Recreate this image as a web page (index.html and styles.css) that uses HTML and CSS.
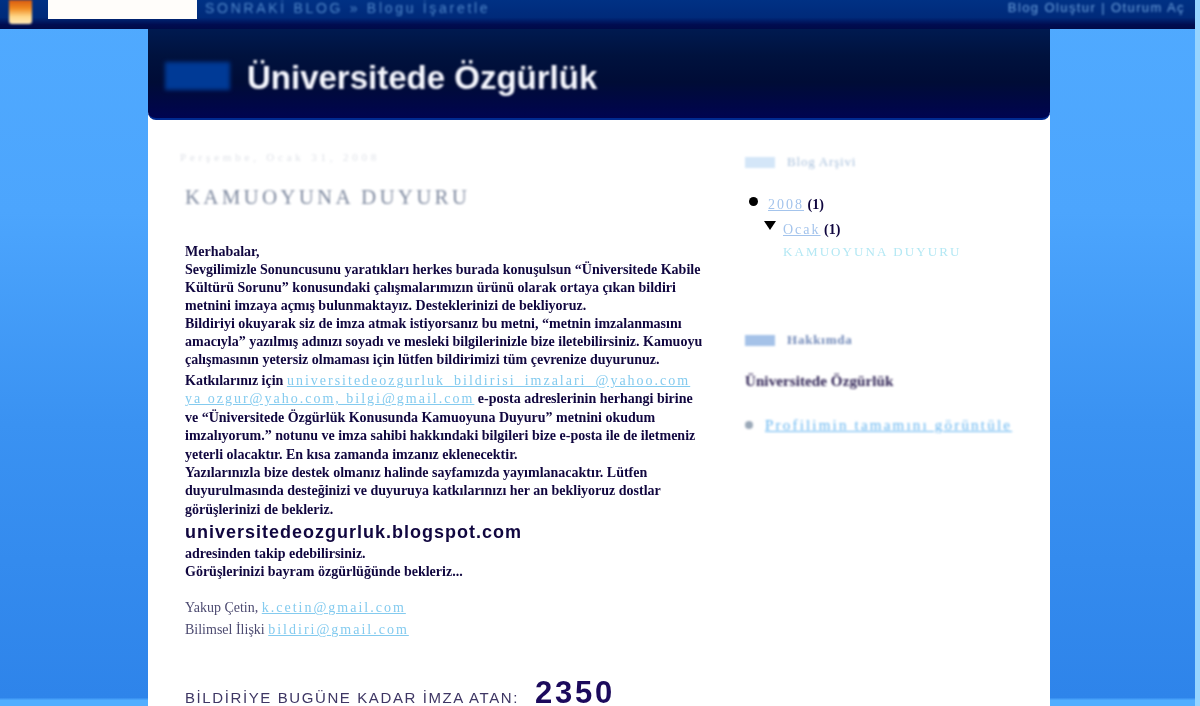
FILE: index.html
```html
<!DOCTYPE html>
<html lang="tr">
<head>
<meta charset="utf-8">
<title>Üniversitede Özgürlük</title>
<link rel="stylesheet" href="styles.css">
</head>
<body>
<div class="navbar">
  <div class="nav-logo"></div>
  <div class="nav-search"></div>
  <div class="nav-left">SONRAKİ BLOG » Blogu İşaretle</div>
  <div class="nav-right">Blog Oluştur | Oturum Aç</div>
</div>
<div class="page">
  <header class="blog-header">
    <div class="header-mark"></div>
    <h1 class="blog-title">Üniversitede Özgürlük</h1>
  </header>
  <div class="columns">
    <main class="main">
      <div class="date">Perşembe, Ocak 31, 2008</div>
      <h2 class="post-title">KAMUOYUNA DUYURU</h2>
      <div class="post">
        <p class="para">Merhabalar,<br>
        Sevgilimizle Sonuncusunu yaratıkları herkes burada konuşulsun “Üniversitede Kabile<br>
        Kültürü Sorunu” konusundaki çalışmalarımızın ürünü olarak ortaya çıkan bildiri<br>
        metnini imzaya açmış bulunmaktayız. Desteklerinizi de bekliyoruz.<br>
        Bildiriyi okuyarak siz de imza atmak istiyorsanız bu metni, “metnin imzalanmasını<br>
        amacıyla” yazılmış adınızı soyadı ve mesleki bilgilerinizle bize iletebilirsiniz. Kamuoyu<br>
        çalışmasının yetersiz olmaması için lütfen bildirimizi tüm çevrenize duyurunuz.</p>
        <p class="para-links">Katkılarınız için <a href="#">universitedeozgurluk_bildirisi_imzalari_@yahoo.com</a><br>
        <a href="#">ya ozgur@yaho.com, bilgi@gmail.com</a> e-posta adreslerinin herhangi birine<br>
        ve “Üniversitede Özgürlük Konusunda Kamuoyuna Duyuru” metnini okudum<br>
        imzalıyorum.” notunu ve imza sahibi hakkındaki bilgileri bize e-posta ile de iletmeniz<br>
        yeterli olacaktır. En kısa zamanda imzanız eklenecektir.<br>
        Yazılarınızla bize destek olmanız halinde sayfamızda yayımlanacaktır. Lütfen<br>
        duyurulmasında desteğinizi ve duyuruya katkılarınızı her an bekliyoruz dostlar<br>
        görüşlerinizi de bekleriz.</p>
        <p class="big-link">universitedeozgurluk.blogspot.com</p>
        <p class="para-end">adresinden takip edebilirsiniz.<br>
        Görüşlerinizi bayram özgürlüğünde bekleriz...</p>
        <p class="contact">Yakup Çetin, <a href="#">k.cetin@gmail.com</a></p>
        <p class="contact">Bilimsel İlişki <a href="#">bildiri@gmail.com</a></p>
        <p class="count"><span class="count-label">BİLDİRİYE BUGÜNE KADAR İMZA ATAN:</span> <strong class="count-num">2350</strong></p>
      </div>
    </main>
    <aside class="side">
      <section class="widget">
        <h3 class="widget-title"><span class="widget-mark"></span>Blog Arşivi</h3>
        <ul class="tree">
          <li class="tree-y"><a href="#">2008</a> (1)
            <ul class="tree-sub">
              <li class="tree-m"><a href="#">Ocak</a> (1)</li>
              <li class="tree-post"><a href="#">KAMUOYUNA DUYURU</a></li>
            </ul>
          </li>
        </ul>
      </section>
      <section class="widget about">
        <h3 class="widget-title dark"><span class="widget-mark mid"></span>Hakkımda</h3>
        <div class="author">Üniversitede Özgürlük</div>
        <div class="profile"><span class="profile-dot"></span><a href="#">Profilimin tamamını görüntüle</a></div>
      </section>
    </aside>
  </div>
</div>
</body>
</html>
```
FILE: styles.css
```css
* { box-sizing: border-box; }
html, body { height: 100%; }
body {
  margin: 0;
  height: 706px;
  overflow: hidden;
  border-right: 5px solid #96d4ff;
  background: linear-gradient(#50aaff 0, #4ca5fd 30%, #3a92f2 60%, #2e84ea 98.8%, #52aeff 99.2%);
  font-family: "Liberation Serif", serif;
}
.navbar {
  height: 29px;
  display: flex;
  align-items: flex-start;
  background: linear-gradient(#003184 0, #002a7a 60%, #000c50 85%, #000a48 100%);
  padding-left: 9px;
}
.nav-logo {
  width: 23px;
  height: 24px;
  background: linear-gradient(#d85a10 0, #f08a20 35%, #ffd88a 70%, #ffe8b8 100%);
  filter: blur(1px);
  border-radius: 0 0 3px 3px;
}
.nav-search {
  width: 149px;
  height: 19px;
  margin-left: 16px;
  background: #fffdfa;
  filter: blur(.5px);
}
.nav-left {
  margin-left: 8px;
  font: 14px/16px "Liberation Sans", sans-serif;
  letter-spacing: 2.7px;
  color: #4f86c8;
  white-space: nowrap;
  filter: blur(1px);
}
.nav-right {
  margin-left: auto;
  margin-right: 10px;
  font: 13px/16px "Liberation Sans", sans-serif;
  letter-spacing: 1.4px;
  color: #6ba0dc;
  white-space: nowrap;
  filter: blur(.9px);
}
.page {
  width: 902px;
  margin-left: 148px;
  height: 677px;
  background: #fff;
}
.blog-header {
  height: 91px;
  display: flex;
  align-items: center;
  padding: 8px 0 0 17px;
  background: linear-gradient(#001a50 0, #00123e 30%, #000c36 60%, #000450 100%);
  border-bottom: 2px solid #002a90;
  border-radius: 0 0 8px 8px;
}
.header-mark {
  width: 65px;
  height: 28px;
  margin-top: -4px;
  background: #003a96;
  filter: blur(2px);
}
.blog-title {
  margin: 0 0 0 17px;
  font: bold 33px/40px "Liberation Sans", sans-serif;
  color: #f6f8ff;
  white-space: nowrap;
  filter: blur(.8px);
}
.columns { display: flex; height: 586px; overflow: hidden; }
.main { width: 597px; padding: 31px 0 0 32px; }
.date {
  font-size: 11px;
  line-height: 13px;
  letter-spacing: 3.8px;
  color: #dfe2e8;
  white-space: nowrap;
  filter: blur(1.1px);
}
.post-title {
  margin: 20px 0 0 5px;
  font: normal 21px/26px "Liberation Serif", serif;
  letter-spacing: 3.2px;
  color: #7f8aa0;
  white-space: nowrap;
  filter: blur(1px);
}
.post {
  margin: 33px 0 0 5px;
  color: #10063f;
  font-size: 14px;
  font-weight: bold;
  white-space: nowrap;
}
.post p { margin: 0; }
.post a { color: #84cbef; font-weight: normal; letter-spacing: 2px; }
.para, .para-links, .big-link, .para-end, .contact { filter: blur(.65px); }
.para { line-height: 18px; }
.post .para-links { line-height: 18.4px; margin-top: 3px; }
.post .big-link {
  font: bold 18px/24px "Liberation Sans", sans-serif;
  letter-spacing: 1px;
  margin-top: 1px;
}
.post .para-end { line-height: 18px; margin-top: 1px; }
.contact { font-weight: normal; color: #4c4a70; line-height: 22px; }
.post .para-end + .contact { margin-top: 16px; }
.post .count {
  margin-top: 42px;
  display: flex;
  align-items: baseline;
  gap: 16px;
  filter: blur(.7px);
}
.count-label { font: normal 15px/20px "Liberation Sans", sans-serif; letter-spacing: 1.6px; color: #3e3664; }
.count-num { font: bold 31px/20px "Liberation Sans", sans-serif; letter-spacing: 2.8px; color: #1c0a5c; }
.side { flex: 1; padding: 34px 0 0; }
.widget-title {
  margin: 0;
  display: flex;
  align-items: center;
  font: normal 13px/16px "Liberation Serif", serif;
  letter-spacing: .8px;
  color: #a8c0dc;
  filter: blur(.9px);
}
.widget-title.dark { color: #7088b8; font-weight: bold; }
.widget-mark { width: 30px; height: 11px; margin-right: 12px; background: #d4e6f8; }
.widget-mark.mid { background: #a5c2e8; }
.tree, .tree-sub { list-style: none; margin: 0; padding: 0; }
.tree {
  margin-top: 22px;
  font-size: 14px;
  line-height: 25px;
  font-weight: bold;
  color: #10063f;
  filter: blur(.7px);
}
.tree a { color: #a4c4ec; font-weight: normal; letter-spacing: 2px; }
.tree-y, .tree-m { position: relative; }
.tree-y { padding-left: 23px; }
.tree-y::before {
  content: "";
  position: absolute;
  left: 4px;
  top: 5px;
  width: 9px;
  height: 9px;
  border-radius: 50%;
  background: #000;
}
.tree-m { padding-left: 15px; }
.tree-m::before {
  content: "";
  position: absolute;
  left: -4px;
  top: 4px;
  border: 6px solid transparent;
  border-top: 9px solid #000;
  border-bottom: 0;
}
.tree-post { line-height: 20px; padding-left: 15px; white-space: nowrap; }
.tree .tree-post a { color: #b4e8f4; letter-spacing: 2.1px; font-size: 13px; text-decoration: none; }
.about { margin-top: 70px; }
.author {
  margin-top: 24px;
  font: bold 15px/18px "Liberation Serif", serif;
  letter-spacing: .1px;
  color: #2c1f52;
  filter: blur(.8px);
}
.profile {
  margin-top: 26px;
  display: flex;
  align-items: center;
  gap: 12px;
  font-size: 15px;
  line-height: 18px;
  filter: blur(.8px);
  white-space: nowrap;
}
.profile-dot { width: 8px; height: 8px; background: #9aa8b8; border-radius: 50%; }
.profile a { color: #63b4f0; letter-spacing: 2.2px; }
```
